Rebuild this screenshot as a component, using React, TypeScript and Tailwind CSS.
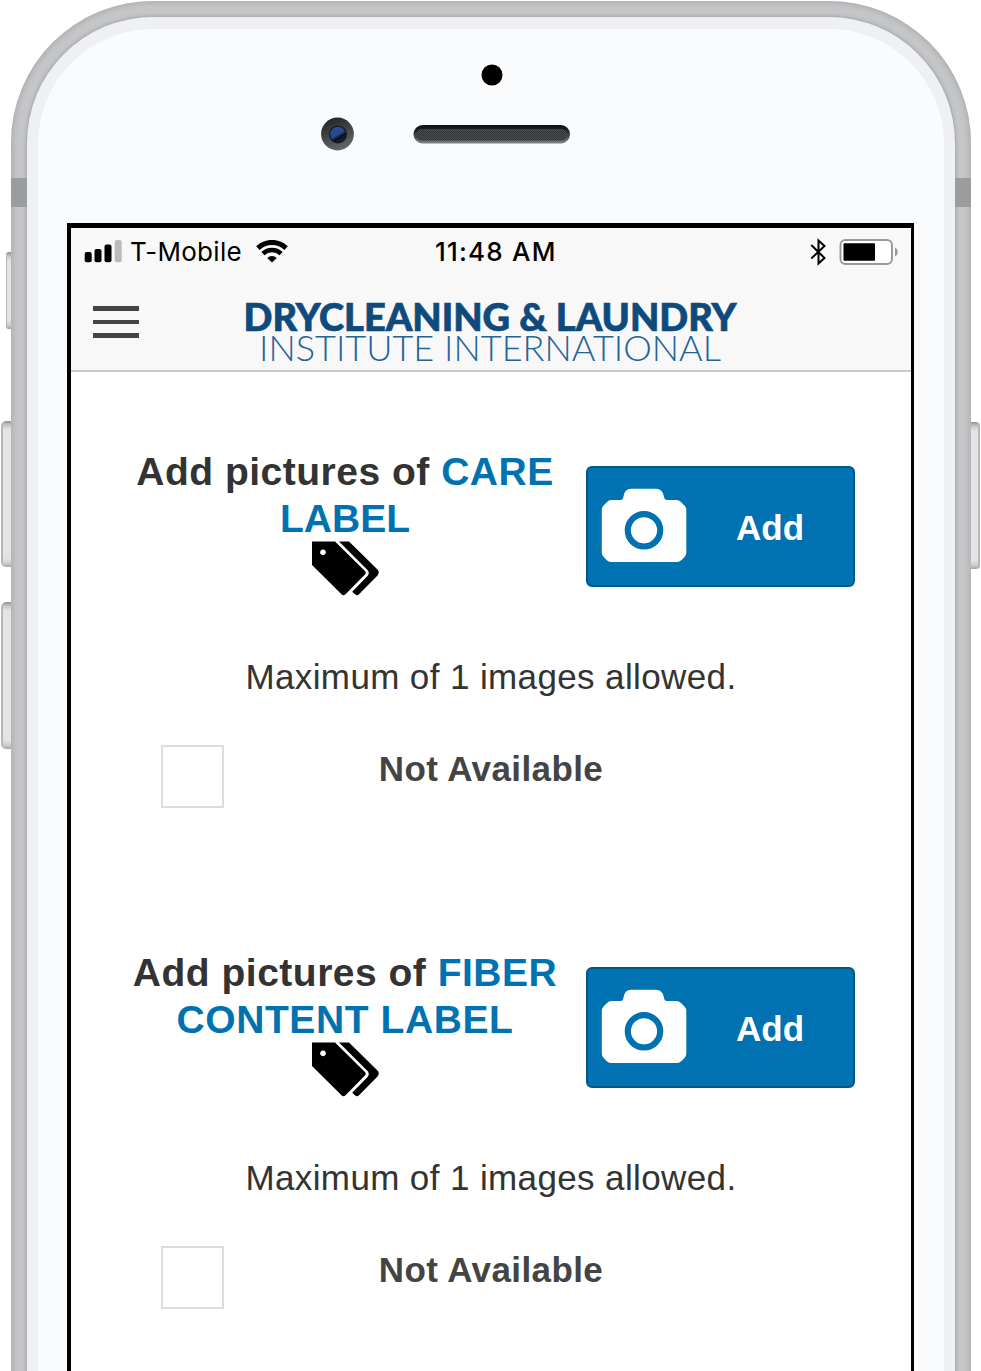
import React from "react";

function SideButton({ className }: { className: string }) {
  return (
    <div
      className={`shrink-0 border-[#b4b8b7] bg-[linear-gradient(to_bottom,#8d9190_0,#c4c7c7_4px,#e3e4e5_9px,#e3e4e5_calc(100%-9px),#cdd0d0_calc(100%-4px),#a0a5a4_100%)] ${className}`}
    />
  );
}

function Hardware() {
  return (
    <svg className="block" width="260" height="100" viewBox="0 0 260 100">
      <defs>
        <linearGradient id="lens" x1="0" y1="0" x2="0.4" y2="1">
          <stop offset="0" stopColor="#1b1c1e" />
          <stop offset="1" stopColor="#626365" />
        </linearGradient>
        <linearGradient id="glass" x1="0.2" y1="0" x2="0.8" y2="1">
          <stop offset="0.1" stopColor="#2a4f90" />
          <stop offset="0.5" stopColor="#24488a" />
          <stop offset="0.66" stopColor="#0b1020" />
          <stop offset="1" stopColor="#17284f" />
        </linearGradient>
        <linearGradient id="slot" x1="0" y1="0" x2="0" y2="1">
          <stop offset="0" stopColor="#0d0e0f" />
          <stop offset="0.3" stopColor="#202122" />
          <stop offset="1" stopColor="#808284" />
        </linearGradient>
        <pattern id="mesh" width="2" height="2" patternUnits="userSpaceOnUse">
          <rect width="2" height="2" fill="#4a4b4d" />
          <rect width="1" height="1" fill="#343537" />
          <rect x="1" y="1" width="1" height="1" fill="#343537" />
        </pattern>
      </defs>
      <circle cx="182" cy="15" r="10.5" fill="#000" />
      <circle cx="27.5" cy="74" r="16.4" fill="url(#lens)" />
      <circle cx="28" cy="74.5" r="9" fill="#17181b" />
      <circle cx="28" cy="74.5" r="7.8" fill="url(#glass)" />
      <rect x="103.5" y="65" width="156.5" height="18.4" rx="9.2" fill="url(#slot)" />
      <rect x="106" y="69" width="151.5" height="11.5" rx="5.7" fill="url(#mesh)" />
    </svg>
  );
}

function StatusBar() {
  return (
    <div className="grid h-[46px] grid-cols-[1fr_130px_1fr] items-center font-[Inter,sans-serif] text-[26px] leading-[46px] text-black">
      <div className="flex items-center pl-[13px]">
        <svg className="mt-[1px]" width="38" height="24" viewBox="0 0 38 24">
          <rect x="0.7" y="12" width="7" height="10.2" rx="2" />
          <rect x="10.5" y="9" width="7" height="13.2" rx="2" />
          <rect x="20.5" y="4.5" width="7" height="17.7" rx="2" />
          <rect x="30.7" y="0" width="7" height="22.2" rx="2" fill="#bcbcbc" />
        </svg>
        <span className="ml-[8px] mt-[1px] w-[112px] whitespace-nowrap tracking-[0.3px]">T-Mobile</span>
        <svg className="ml-[14px]" width="32" height="23" viewBox="0 0 32 23" fill="none" stroke="#000">
          <path d="M1.900 8.100a20.300 20.300 0 0 1 28.200 0" strokeWidth="5" />
          <path d="M6.900 13.700a13.200 13.200 0 0 1 18.200 0" strokeWidth="4.600" />
          <path d="M16 22.400l-4.800-4.400a6.800 6.800 0 0 1 9.600 0z" fill="#000" stroke="none" />
        </svg>
      </div>
      <div className="mt-[1px] whitespace-nowrap pl-[9px] text-left font-medium tracking-[1.2px]">11:48 AM</div>
      <div className="flex items-center justify-end pr-[12px]">
        <svg width="18" height="28" viewBox="0 0 18 28" fill="none" stroke="#000" strokeWidth="2">
          <path d="M1.300 7l13.200 13L8.500 25.500V2.500L14.500 8 1.300 20.500" />
        </svg>
        <svg className="ml-[11px]" width="60" height="26" viewBox="0 0 60 26">
          <rect x="1.500" y="1" width="51.500" height="24" rx="5" fill="#fff" stroke="#999" strokeWidth="1.900" />
          <rect x="4.500" y="4.200" width="31.500" height="17.600" rx="1" fill="#000" />
          <path d="M56 8.500c3.600 1.500 3.600 7.500 0 9z" fill="#999" />
        </svg>
      </div>
    </div>
  );
}

function NavBar() {
  return (
    <div className="flex h-[98px] border-b-2 border-[#c8c8c8] pl-[22px]">
      <div className="mt-[32px] flex h-[32px] w-[46px] flex-col justify-between">
        <span className="h-[5px] bg-[#444]" />
        <span className="h-[4px] bg-[#444]" />
        <span className="h-[5px] bg-[#444]" />
      </div>
      <svg className="ml-[101px] mt-[20px]" width="510" height="74" viewBox="0 0 510 74" fontFamily="Lato, sans-serif" fill="#0e4b7c">
        <text x="3.500" y="36.500" fontSize="37.500" fontWeight="900" textLength="493" lengthAdjust="spacingAndGlyphs" stroke="#0e4b7c" strokeWidth="0.700">
          DRYCLEANING &amp; LAUNDRY
        </text>
        <text x="19" y="67" fontSize="34.500" fontWeight="300" textLength="462" lengthAdjust="spacingAndGlyphs" fill="#22639a">
          INSTITUTE INTERNATIONAL
        </text>
      </svg>
    </div>
  );
}

function TagsIcon() {
  return (
    <svg className="-mt-[1px] ml-[192px] block" width="68" height="55" viewBox="0 0 68 55">
      <path
        fillRule="evenodd"
        d="M0 0.400H23L53.200 30.200Q54.500 31.800 53.200 33.300L33.500 53.300Q31.500 55 29.500 53.300L0 24ZM11 8.500a2.900 2.900 0 1 0 .01 0z"
      />
      <path d="M27 0.400H37L65.500 28.500Q68 31.500 65.500 34.500L47 53.300Q45 55 43 53.300L40.200 50.800 56 34.500Q57.700 31.800 56 29.500Z" />
    </svg>
  );
}

function CameraIcon() {
  return (
    <svg width="86" height="75" viewBox="0 0 86 75" fill="#fff">
      <path d="M10 12H19.500Q22 12 22.500 8.500 23.500 0.700 30 0.700H55Q61.500 0.700 63 8.500 63.300 12 66 12H75.500Q78 12 80 14L83.500 17.500Q85.300 19.500 85.300 22V64.500Q85.300 67 83.500 69L80.500 72Q78.500 74 76 74H10Q7.500 74 5.500 72L2.700 69Q0.800 67 0.800 64.500V22Q0.800 19.500 2.500 17.500L6 14Q8 12 10 12Z" />
      <circle cx="43" cy="42.300" r="16.200" stroke="#0072b1" strokeWidth="6.200" />
    </svg>
  );
}

interface PhotoSectionProps {
  first: string;
  second: string;
  secondClass?: string;
}

function PhotoSection({ first, second, secondClass = "" }: PhotoSectionProps) {
  return (
    <section className="h-[501px] pl-[49px]">
      <div className="flex">
        <div className="w-[450px] text-center">
          <h2 className="whitespace-nowrap text-[39px] font-bold leading-[47px] text-[#333]">
            <span className="tracking-[0.5px]">Add pictures of </span>
            <span className="tracking-[0.5px] text-[#0072b1]">{first}</span>
            <br />
            <span className={`text-[#0072b1] ${secondClass}`}>{second}</span>
          </h2>
          <TagsIcon />
        </div>
        <button className="ml-[16px] mt-[18px] flex h-[121px] w-[269px] rounded-[6px] border-2 border-[#005687] bg-[#0072b1] pl-[13px] pt-[20px] text-white">
          <CameraIcon />
          <span className="ml-[49px] mt-[18px] text-[35px] font-bold leading-[44px]">Add</span>
        </button>
      </div>
      <p className="mt-[59px] w-[742px] whitespace-nowrap text-center text-[35px] leading-[44px] tracking-[0.38px] text-[#333]">
        Maximum of 1 images allowed.
      </p>
      <div className="mt-[46px] flex pl-[41px]">
        <div className="h-[63px] w-[63px] border-2 border-[#ddd] bg-white" />
        <span className="ml-[136px] mt-[2px] w-[262px] whitespace-nowrap text-center text-[35px] font-bold leading-[44px] tracking-[0.4px] text-[#444]">
          Not Available
        </span>
      </div>
    </section>
  );
}

export default function App() {
  return (
    <div className="flex h-[1371px] w-[981px] overflow-hidden bg-white font-['Liberation_Sans',Arial,sans-serif]">
      <div className="flex w-[11px] shrink-0 flex-col items-end">
        <SideButton className="mt-[252px] h-[77px] w-[5px] rounded-l-[2px] border-l" />
        <SideButton className="mt-[92px] h-[146px] w-[10px] rounded-l-[5px] border-l-2" />
        <SideButton className="mt-[35px] h-[147px] w-[10px] rounded-l-[5px] border-l-2" />
      </div>
      <div className="relative mt-[1px] h-[1600px] w-[960px] shrink-0 rounded-t-[142px] bg-[#c5c6c8] p-[16px] shadow-[inset_0_0_6px_1px_#a6a7a9]">
        <div className="absolute left-0 top-[177px] h-[29px] w-[16px] bg-[#9b9c9e]" />
        <div className="absolute right-0 top-[177px] h-[29px] w-[16px] bg-[#9b9c9e]" />
        <div className="h-full rounded-t-[126px] bg-[#eff0f3] px-[11px] pt-[12px] shadow-[0_0_4px_#8f9092]">
          <div className="h-full rounded-t-[115px] bg-[#fafbfd] pl-[29px] pt-[31px]">
            <div className="h-[163px] pl-[243px]">
              <Hardware />
            </div>
            <main className="h-[1300px] w-[847px] border-l-4 border-r-[3px] border-t-[5px] border-black bg-white">
              <header className="bg-[#f8f8f8]">
                <StatusBar />
                <NavBar />
              </header>
              <div className="pt-[76px]">
                <PhotoSection first="CARE" second="LABEL" />
                <PhotoSection first="FIBER" second="CONTENT LABEL" secondClass="tracking-[0.6px]" />
              </div>
            </main>
          </div>
        </div>
      </div>
      <div className="w-[10px] shrink-0">
        <SideButton className="mt-[422px] h-[147px] w-[9px] rounded-r-[4px] border-r-2" />
      </div>
    </div>
  );
}
